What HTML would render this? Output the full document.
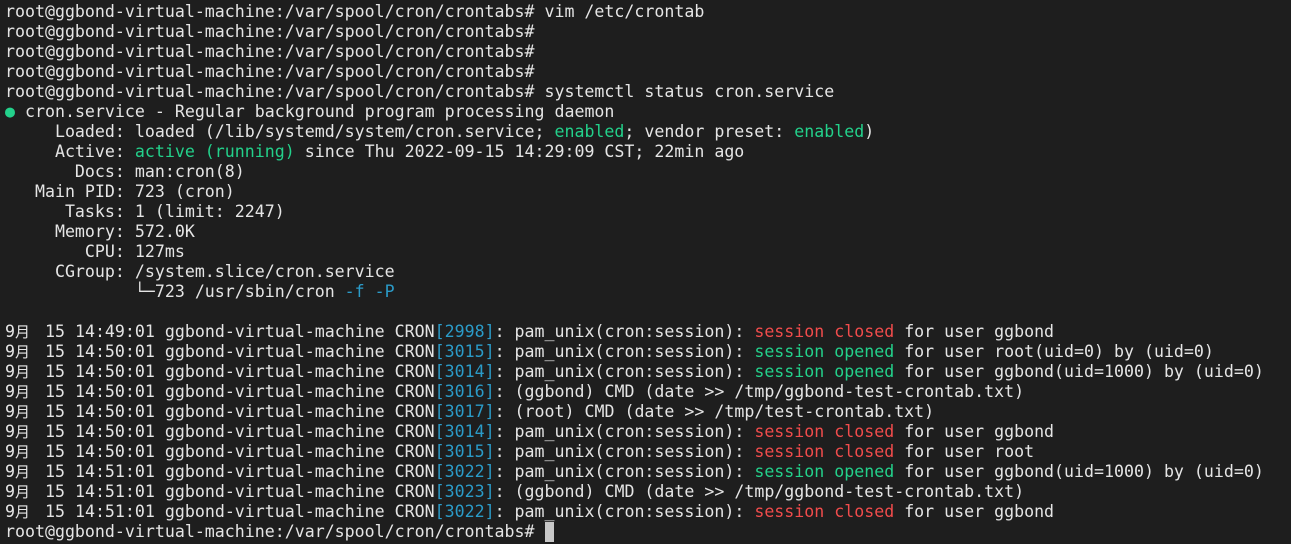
<!DOCTYPE html>
<html><head><meta charset="utf-8"><style>
html,body{margin:0;padding:0;background:#1e1e1e;width:1291px;height:544px;overflow:hidden}
pre{margin:0;position:absolute;left:5px;top:2px;font-family:"DejaVu Sans Mono","Liberation Mono","Noto Sans CJK SC",monospace;font-size:16.6px;line-height:20px;color:#e5e5e5;white-space:pre}
.g{color:#23d18b}.r{color:#f14c4c}.c{color:#2b9bc8}
.m{display:inline-block;width:20px;font-family:"Noto Sans CJK SC",sans-serif;font-size:15px;line-height:20px;vertical-align:top}
.cur{display:inline-block;width:9px;height:20px;background:#c8c8c8;vertical-align:top;margin-left:1px}
</style></head><body><pre>root@ggbond-virtual-machine:/var/spool/cron/crontabs# vim /etc/crontab
root@ggbond-virtual-machine:/var/spool/cron/crontabs#
root@ggbond-virtual-machine:/var/spool/cron/crontabs#
root@ggbond-virtual-machine:/var/spool/cron/crontabs#
root@ggbond-virtual-machine:/var/spool/cron/crontabs# systemctl status cron.service
<span class="g">●</span> cron.service - Regular background program processing daemon
     Loaded: loaded (/lib/systemd/system/cron.service; <span class="g">enabled</span>; vendor preset: <span class="g">enabled</span>)
     Active: <span class="g">active (running)</span> since Thu 2022-09-15 14:29:09 CST; 22min ago
       Docs: man:cron(8)
   Main PID: 723 (cron)
      Tasks: 1 (limit: 2247)
     Memory: 572.0K
        CPU: 127ms
     CGroup: /system.slice/cron.service
             └─723 /usr/sbin/cron <span class="c">-f -P</span>

9<span class="m">月</span> 15 14:49:01 ggbond-virtual-machine CRON<span class="c">[2998]</span>: pam_unix(cron:session): <span class="r">session closed</span> for user ggbond
9<span class="m">月</span> 15 14:50:01 ggbond-virtual-machine CRON<span class="c">[3015]</span>: pam_unix(cron:session): <span class="g">session opened</span> for user root(uid=0) by (uid=0)
9<span class="m">月</span> 15 14:50:01 ggbond-virtual-machine CRON<span class="c">[3014]</span>: pam_unix(cron:session): <span class="g">session opened</span> for user ggbond(uid=1000) by (uid=0)
9<span class="m">月</span> 15 14:50:01 ggbond-virtual-machine CRON<span class="c">[3016]</span>: (ggbond) CMD (date &gt;&gt; /tmp/ggbond-test-crontab.txt)
9<span class="m">月</span> 15 14:50:01 ggbond-virtual-machine CRON<span class="c">[3017]</span>: (root) CMD (date &gt;&gt; /tmp/test-crontab.txt)
9<span class="m">月</span> 15 14:50:01 ggbond-virtual-machine CRON<span class="c">[3014]</span>: pam_unix(cron:session): <span class="r">session closed</span> for user ggbond
9<span class="m">月</span> 15 14:50:01 ggbond-virtual-machine CRON<span class="c">[3015]</span>: pam_unix(cron:session): <span class="r">session closed</span> for user root
9<span class="m">月</span> 15 14:51:01 ggbond-virtual-machine CRON<span class="c">[3022]</span>: pam_unix(cron:session): <span class="g">session opened</span> for user ggbond(uid=1000) by (uid=0)
9<span class="m">月</span> 15 14:51:01 ggbond-virtual-machine CRON<span class="c">[3023]</span>: (ggbond) CMD (date &gt;&gt; /tmp/ggbond-test-crontab.txt)
9<span class="m">月</span> 15 14:51:01 ggbond-virtual-machine CRON<span class="c">[3022]</span>: pam_unix(cron:session): <span class="r">session closed</span> for user ggbond
root@ggbond-virtual-machine:/var/spool/cron/crontabs# <span class="cur"></span></pre></body></html>
